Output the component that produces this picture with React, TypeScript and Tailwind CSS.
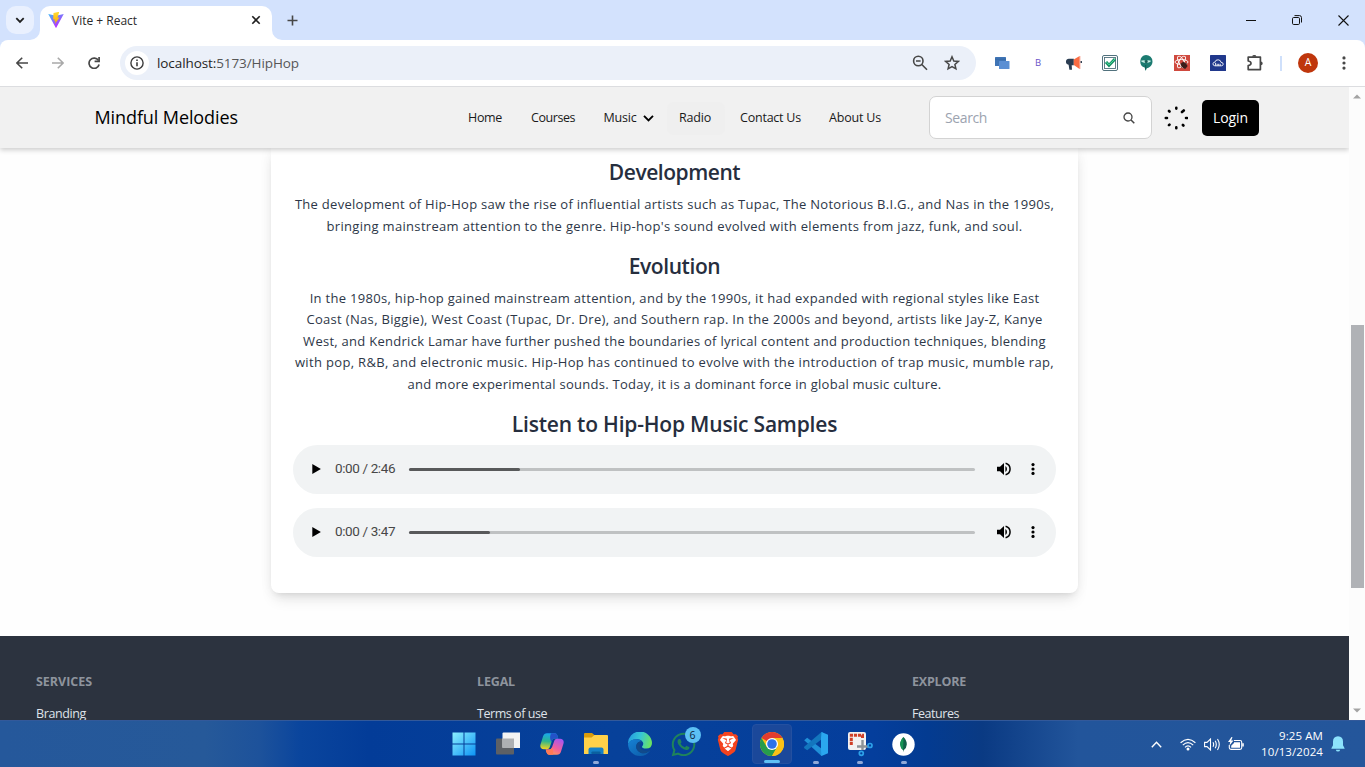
import React from "react";
import { FaWhatsapp } from "react-icons/fa";
import { SiBrave } from "react-icons/si";

type Line = { text: string; cls: string };

const development: Line[] = [
  { text: "The development of Hip-Hop saw the rise of influential artists such as Tupac, The Notorious B.I.G., and Nas in the 1990s,", cls: "tracking-[0.283px]" },
  { text: "bringing mainstream attention to the genre. Hip-hop's sound evolved with elements from jazz, funk, and soul.", cls: "tracking-[0.312px]" },
];

const evolution: Line[] = [
  { text: "In the 1980s, hip-hop gained mainstream attention, and by the 1990s, it had expanded with regional styles like East", cls: "tracking-[0.3px]" },
  { text: "Coast (Nas, Biggie), West Coast (Tupac, Dr. Dre), and Southern rap. In the 2000s and beyond, artists like Jay-Z, Kanye", cls: "tracking-[0.328px]" },
  { text: "West, and Kendrick Lamar have further pushed the boundaries of lyrical content and production techniques, blending", cls: "tracking-[0.272px]" },
  { text: "with pop, R&B, and electronic music. Hip-Hop has continued to evolve with the introduction of trap music, mumble rap,", cls: "tracking-[0.331px]" },
  { text: "and more experimental sounds. Today, it is a dominant force in global music culture.", cls: "tracking-[0.265px]" },
];

function ViteLogo() {
  return (
    <svg className="ml-2 size-4 shrink-0" viewBox="0 0 32 32">
      <defs>
        <linearGradient id="vp" x1="0" y1="0" x2="0.6" y2="0.9">
          <stop offset="0" stopColor="#41b8f8" />
          <stop offset="1" stopColor="#b830fe" />
        </linearGradient>
        <linearGradient id="vy" x1="0" y1="0" x2="0" y2="1">
          <stop offset="0" stopColor="#ffdd35" />
          <stop offset="1" stopColor="#ffa800" />
        </linearGradient>
      </defs>
      <path d="M0.5 4 16 7.5 31.5 4 16.5 31.5Q16 32 15.5 31.5Z" fill="url(#vp)" />
      <path d="M22.5 -0.5 11 1.8 10.3 15 13.6 14.3 12.7 18.6 15 18 13.8 23.8 23 11 19 11.5Z" fill="url(#vy)" />
    </svg>
  );
}

function TabStrip() {
  return (
    <div className="flex h-10 shrink-0 items-end bg-[#d3e2fd]">
      <div className="flex h-10 w-10 items-center pl-1.5">
        <div className="flex size-7 items-center justify-center rounded-[10px] bg-[#e9f0fe]">
          <svg className="size-[10px]" viewBox="0 0 10 10" fill="none" stroke="#1f1f1f" strokeWidth="1.8"><path d="M1.3 3.2 5 6.9 8.7 3.2" /></svg>
        </div>
      </div>
      <div className="relative flex h-[34px] w-[232px] items-center rounded-t-[10px] bg-white pb-[6px]">
        <svg className="absolute bottom-0 -left-[10px] size-[10px]" viewBox="0 0 10 10"><path d="M10 0V10H0A10 10 0 0 0 10 0" fill="#fff" /></svg>
        <svg className="absolute -right-[10px] bottom-0 size-[10px]" viewBox="0 0 10 10"><path d="M0 0V10H10A10 10 0 0 1 0 0" fill="#fff" /></svg>
        <ViteLogo />
        <span className="mt-px ml-2 text-[12px] tracking-[0px] whitespace-nowrap text-[#2b2b2b]">Vite + React</span>
        <svg className="mr-[11px] ml-auto size-[10px]" viewBox="0 0 10 10" stroke="#1f1f1f" strokeWidth="1.6"><path d="M1.3 1.3 8.7 8.7M8.7 1.3 1.3 8.7" /></svg>
      </div>
      <div className="flex h-10 w-10 items-center justify-center">
        <svg className="size-[11px]" viewBox="0 0 11 11" stroke="#474747" strokeWidth="1.6"><path d="M5.5 .5V10.5M.5 5.5H10.5" /></svg>
      </div>
      <div className="ml-auto flex h-10 items-center gap-9 pr-[16px]">
        <svg className="size-[10px]" viewBox="0 0 10 10" stroke="#111"><path d="M0 5.5H10" /></svg>
        <svg className="size-[10px]" viewBox="0 0 10 10" fill="none" stroke="#111"><rect x=".5" y="2.5" width="7" height="7" rx="1.2" /><path d="M2.5 .6H7.6Q9.5.7 9.5 2.6V7.5" /></svg>
        <svg className="size-[11px]" viewBox="0 0 11 11" stroke="#111" strokeWidth="1.1"><path d="M.5.5 10.5 10.5M10.5.5.5 10.5" /></svg>
      </div>
    </div>
  );
}

function Extensions() {
  return (
    <div className="flex items-center gap-5">
      <svg className="size-4" viewBox="0 0 16 16"><rect x="1" y="2" width="11" height="9" rx=".5" fill="#3f74b5" /><rect x="5" y="6" width="10.5" height="8" rx=".5" fill="#5b8fd3" /><path d="M1 4.2H12" stroke="#3567a5" strokeWidth="1" /></svg>
      <span className="w-4 text-center text-[9.5px] font-medium text-[#6a51c7]">B</span>
      <svg className="size-4" viewBox="0 0 16 16"><path d="M7.8 3.8H3A2.8 2.8 0 0 0 0 6.8 2.8 2.8 0 0 0 2.6 9.8L3.4 14.8H6L5.7 10.2H7.8Z" fill="#2b3d52" /><path d="M7.8 4.4 13.6 1V14L7.8 10Z" fill="#fa6c43" /><path d="M13.6 1H14.5V14H13.6Z" fill="#ef5638" opacity=".4" /><circle cx="15.3" cy="7" r="1" fill="#263548" /></svg>
      <svg className="size-4" viewBox="0 0 16 16" fill="none"><rect x=".5" y=".5" width="15" height="15" rx="1.5" stroke="#51717d" /><rect x="2.5" y="2.5" width="11" height="11" stroke="#51717d" strokeWidth=".9" /><path d="M4 7 7 10.3 13 4" stroke="#168c62" strokeWidth="3" /><path d="M4.2 7 7 9.8 13 4" stroke="#4fe0a0" strokeWidth="1" /></svg>
      <svg className="size-4" viewBox="0 0 16 16"><path d="M8 0A6.5 6.5 0 0 1 14.5 6.4C14.5 10 12 12.5 8.7 13.2L7.5 16 6.7 12.6A6.5 6.5 0 0 1 8 0Z" fill="#1c7b71" /><path d="M3 5.7Q5 4.6 8 5.7 11 4.6 13 5.7 12.3 7.8 8 7.8 3.7 7.8 3 5.7Z" fill="#c5ece4" /><circle cx="8.2" cy="6.4" r="1.5" fill="#185c55" /><path d="M7.7 10V14.5" stroke="#105c54" /></svg>
      <svg className="size-4" viewBox="0 0 16 16" fill="none"><rect width="16" height="16" fill="#cf493e" /><g stroke="#fff" strokeWidth=".9"><ellipse cx="7.5" cy="7" rx="6.5" ry="2.5" /><ellipse cx="7.5" cy="7" rx="6.5" ry="2.5" transform="rotate(60 7.5 7)" /><ellipse cx="7.5" cy="7" rx="6.5" ry="2.5" transform="rotate(120 7.5 7)" /></g><ellipse cx="10" cy="10.3" rx="2.7" ry="3.4" fill="#3b1d1a" transform="rotate(-35 10 10.3)" /><path d="M6.2 9 13.7 11M7 12.5 13 8M9 6.7 11.3 14" stroke="#3b1d1a" strokeWidth=".7" /></svg>
      <svg className="size-4" viewBox="0 0 16 16" fill="none"><rect width="16" height="16" rx=".6" fill="#20388c" /><path d="M4.8 10.8Q2.8 10.5 3 8.7 3.2 7.2 4.8 7.2 5.5 4.6 8.2 4.8 10.7 5 11.1 7.4 13.2 7.4 13.2 9.2 13 10.8 11.4 10.8Z" stroke="#fff" strokeWidth=".9" /><path d="M5.6 7.8V10.7M7.2 8.8V10.7M8.7 8.8V10.7M10.2 8.8V10.7" stroke="#fff" strokeWidth=".9" /></svg>
      <svg className="size-[18px]" viewBox="0 0 18 18" fill="none" stroke="#474747" strokeWidth="1.7"><path d="M2.2 3.1H14.4V15.6H2.2V11.6Q5 11.2 5 9.3 5 7.4 2.2 7Z" strokeLinejoin="round" /><path d="M6.2 2.8V2.4Q6.3 1 8.3 1 10.2 1 10.4 2.4V2.8ZM14.8 7.5Q16.7 7.6 16.7 9.4 16.7 11 14.8 11.3Z" fill="#474747" stroke="none" /></svg>
    </div>
  );
}

function Toolbar() {
  return (
    <div className="flex h-[46px] shrink-0 items-center rounded-t-[8px] bg-white">
      <div className="flex w-[120px] items-center gap-6 pl-4">
        <svg className="size-3" viewBox="0 0 12 12" fill="none" stroke="#474747" strokeWidth="1.6"><path d="M12 6H1M6.2.7.9 6 6.2 11.3" /></svg>
        <svg className="size-3" viewBox="0 0 12 12" fill="none" stroke="#a9a9a9" strokeWidth="1.6"><path d="M0 6H11M5.8.7 11.1 6 5.8 11.3" /></svg>
        <svg className="size-3" viewBox="0 0 12 12" fill="none" stroke="#474747" strokeWidth="1.7"><path d="M10.4 3.4A5.1 5.1 0 1 0 11.1 7.5" /><path d="M11.1 0V4.4H6.6" /></svg>
      </div>
      <div className="flex h-[34px] w-[856px] items-center rounded-full bg-[#ebf0f9] pr-4 pl-[5px]">
        <div className="flex size-6 items-center justify-center rounded-full bg-white">
          <svg className="size-[14px]" viewBox="0 0 14 14" fill="none" stroke="#3c3c3c" strokeWidth="1.4"><circle cx="7" cy="7" r="6.1" /><path d="M7 6.2V10.3M7 3.6V5" strokeWidth="1.6" /></svg>
        </div>
        <span className="ml-2 text-[13.5px] tracking-[-0.089px] text-[#565656]"><span className="text-[#1f1f1f]">localhost:</span>5173/HipHop</span>
        <svg className="mr-[16px] ml-auto size-4" viewBox="0 0 16 16" fill="none" stroke="#474747" strokeWidth="1.6"><circle cx="6.3" cy="6" r="4.7" /><path d="M9.8 9.5 15 14.7M4 6H8.6" /></svg>
        <svg className="size-4" viewBox="0 0 16 16" fill="none" stroke="#474747" strokeWidth="1.5"><path d="M8 1.8 9.8 6 14.3 6.4 10.9 9.4 11.9 13.8 8 11.5 4.1 13.8 5.1 9.4 1.7 6.4 6.2 6Z" /></svg>
      </div>
      <div className="ml-[18px]"><Extensions /></div>
      <div className="ml-[16px] h-[15px] w-[2px] bg-[#cfe0fb]" />
      <div className="ml-[16px] flex size-5 items-center justify-center rounded-full bg-[#bf360c] text-[10.5px] text-white">A</div>
      <svg className="ml-[24px] h-[14px] w-1" viewBox="0 0 4 14" fill="#474747"><circle cx="2" cy="1.9" r="1.6" /><circle cx="2" cy="7" r="1.6" /><circle cx="2" cy="12.1" r="1.6" /></svg>
    </div>
  );
}

function NavBar() {
  return (
    <header className="z-10 flex h-[61px] w-full shrink-0 items-center bg-[#f1f1f1] text-black shadow-[0_2px_5px_rgba(0,0,0,0.2)]">
      <div className="w-[468px] shrink-0 pb-px pl-[94.5px] text-[18px] leading-[26px] font-medium tracking-[-0.1px] whitespace-nowrap">Mindful Melodies</div>
      <nav className="flex w-[461px] shrink-0 items-center pt-[2px] text-[12.5px] whitespace-nowrap text-[#1a1a1a]">
        <a className="w-[63px] shrink-0 tracking-[-0.33px]">Home</a>
        <a className="w-[72.5px] shrink-0 tracking-[-0.44px]">Courses</a>
        <a className="flex w-[63.5px] shrink-0 items-center tracking-[-0.2px]">
          Music
          <svg className="ml-[6px] h-[7px] w-[11px]" viewBox="0 0 11 7" fill="none" stroke="#000" strokeWidth="1.9"><path d="M1 .9 5.5 5.4 10 .9" /></svg>
        </a>
        <a className="w-[58px] shrink-0 rounded-[7px] bg-[#efefef] py-[7px] pl-[12px] tracking-[-0.197px]">Radio</a>
        <a className="ml-[15px] w-[89px] shrink-0 tracking-[-0.222px]">Contact Us</a>
        <a className="shrink-0 tracking-[-0.189px]">About Us</a>
      </nav>
      <div className="flex h-[43px] w-[223px] shrink-0 items-center justify-between rounded-[7px] border border-[#d3d3d3] bg-white pr-[16px] pl-[15px]">
        <span className="text-[14px] tracking-[-0.38px] text-[#9ca3af]">Search</span>
        <svg className="size-3" viewBox="0 0 12 12" fill="none" stroke="#444" strokeWidth="1.3"><circle cx="5" cy="5" r="4" /><path d="M8 8 11.3 11.3" strokeWidth="1.5" /></svg>
      </div>
      <svg className="ml-[12px] size-6" viewBox="0 0 24 24" stroke="#000" strokeLinecap="round">
        <path strokeWidth="2.6" d="M12.3 1.8V2.6M12.3 21.4V22.2M1.8 12H3M22 12H23M5 5 5.5 5.5M18 6 19.8 4.5M18.9 19 19.4 19.5M5 19.2 5.5 18.7" />
      </svg>
      <button className="ml-[14px] h-9 w-[57px] rounded-[5px] bg-black text-[14px] font-medium tracking-[-0.09px] text-white">Login</button>
    </header>
  );
}

function Paragraph({ lines }: { lines: Line[] }) {
  return (
    <p className="mb-[14.4px] text-center text-[13px] leading-[21.6px] text-[#2d3748]">
      {lines.map((l) => (
        <span key={l.text} className={`block whitespace-nowrap ${l.cls}`}>{l.text}</span>
      ))}
    </p>
  );
}

function AudioPlayer({ time, played }: { time: string; played: string }) {
  return (
    <div className="mb-[14px] flex h-[49px] items-center rounded-full bg-[#f1f3f4] pl-[19px]">
      <svg className="h-[10px] w-[9px]" viewBox="0 0 9 10"><path d="M.3 0 8.9 5 .3 10Z" fill="#000" /></svg>
      <span className="ml-[14px] w-[74px] pb-[2px] font-['Roboto',sans-serif] text-[13.5px] tracking-[-0.38px] text-[#474747]">{time}</span>
      <div className="h-[3px] w-[566px] rounded-full bg-[#bfc1c2]">
        <div className={`h-[3px] rounded-full bg-[#58595a] ${played}`} />
      </div>
      <svg className="mb-px ml-[22px] h-[14px] w-[14px]" viewBox="0 0 14 14"><path d="M0 4.8H3L7 1V13L3 9.2H0Z" fill="#000" /><path d="M8.4 4V10Q10 9 10 7 10 5 8.4 4Z" fill="#000" /><path d="M8.6 1.2A6 6 0 0 1 8.6 12.8" fill="none" stroke="#000" strokeWidth="1.5" /></svg>
      <svg className="mb-px ml-[20px] h-[12px] w-[4px]" viewBox="0 0 4 12" fill="#000"><circle cx="2" cy="1.6" r="1.6" /><circle cx="2" cy="6" r="1.6" /><circle cx="2" cy="10.4" r="1.6" /></svg>
    </div>
  );
}

const heading = "text-center text-[21px] font-semibold leading-[28.8px] text-[#262e3e]";

function Page() {
  return (
    <div className="flex w-[1349px] flex-col overflow-hidden bg-[#fefefe]">
      <NavBar />
      <main className="ml-[271px] h-[445px] w-[807px] shrink-0 rounded-b-[8px] bg-white px-[22px] pt-[9.6px] shadow-[0_9px_14px_-3px_rgba(0,0,0,0.1),0_4px_6px_-4px_rgba(0,0,0,0.1),0_0_14px_rgba(0,0,0,0.05)]">
        <h2 className={`${heading} mb-[7.6px] tracking-[-0.45px]`}>Development</h2>
        <Paragraph lines={development} />
        <h2 className={`${heading} mb-[7.2px] tracking-[-0.42px]`}>Evolution</h2>
        <Paragraph lines={evolution} />
        <h2 className={`${heading} -mt-[0.4px] mb-[6.6px] tracking-[-0.2px]`}>Listen to Hip-Hop Music Samples</h2>
        <AudioPlayer time="0:00 / 2:46" played="w-[111px]" />
        <AudioPlayer time="0:00 / 3:47" played="w-[81px]" />
      </main>
      <footer className="mt-[43px] flex h-[84px] shrink-0 bg-[#2c333f] pt-[37px] pl-[36px] text-[12.5px] leading-[18px] text-[#dfe3ea]">
        <div className="w-[441px]">
          <h6 className="mb-[16px] font-bold tracking-[-0.03px] text-[#8e949d]">SERVICES</h6>
          <a className="block leading-[13px] tracking-[-0.38px]">Branding</a>
        </div>
        <div className="w-[435px]">
          <h6 className="mb-[16px] font-bold tracking-[-0.16px] text-[#8e949d]">LEGAL</h6>
          <a className="block leading-[13px] tracking-[-0.45px]">Terms of use</a>
        </div>
        <div>
          <h6 className="mb-[16px] font-bold tracking-[-0.2px] text-[#8e949d]">EXPLORE</h6>
          <a className="block leading-[13px] tracking-[-0.45px]">Features</a>
        </div>
      </footer>
    </div>
  );
}

function Scrollbar() {
  return (
    <div className="flex w-4 flex-col items-center bg-[#fcfcfc]">
      <svg className="mt-[7px] h-[5px] w-[8px] shrink-0" viewBox="0 0 8 5"><path d="M0 4.6 4 .4 8 4.6Z" fill="#a3a3a3" /></svg>
      <div className="mt-[226px] ml-px h-[263px] w-[13px] bg-[#b0b2b6]" />
      <svg className="mt-auto mb-[7px] h-[5px] w-[8px] shrink-0" viewBox="0 0 8 5"><path d="M0 .4 4 4.6 8 .4Z" fill="#a3a3a3" /></svg>
    </div>
  );
}

function Slot({ children, mark = "none" }: { children: React.ReactNode; mark?: "none" | "dot" | "active" }) {
  return (
    <div className="flex w-11 shrink-0 justify-center">
      <div className={mark === "active" ? "relative flex h-10 w-10 items-center justify-center rounded-[4px] border border-[#2450a0] bg-[#1b489a]" : "relative flex h-10 w-10 items-center justify-center"}>
        {children}
        {mark === "dot" && <div className="absolute bottom-0 left-[17px] h-[3px] w-[6px] rounded-full bg-[#8fa9d8]" />}
        {mark === "active" && <div className="absolute bottom-0 left-[11px] h-[3px] w-4 rounded-full bg-[#5fc0f5]" />}
      </div>
    </div>
  );
}

function TaskIcons() {
  return (
    <div className="flex items-center">
      <Slot>
        <svg className="size-6" viewBox="0 0 24 24"><defs><linearGradient id="win" x1="0" y1="0" x2="1" y2="1"><stop offset="0" stopColor="#8cf0ff" /><stop offset="1" stopColor="#0c93f5" /></linearGradient></defs><path fill="url(#win)" d="M.5.5H11.5V11.5H.5ZM12.5.5H23.5V11.5H12.5ZM.5 12.5H11.5V23.5H.5ZM12.5 12.5H23.5V23.5H12.5Z" /></svg>
      </Slot>
      <Slot>
        <svg className="size-6" viewBox="0 0 24 24"><rect x="0" y="6.5" width="18" height="16" rx="1" fill="#5d6065" /><rect x="6.5" y=".5" width="18" height="15.5" rx="1" fill="#f3f3f3" /><path d="M6.5 6.5H18V16H6.5Z" fill="#aeb0b3" /></svg>
      </Slot>
      <Slot>
        <svg className="size-6" viewBox="0 0 24 24"><defs><linearGradient id="cpa" x1=".4" y1="0" x2=".3" y2="1"><stop offset="0" stopColor="#18a7ef" /><stop offset=".5" stopColor="#2cb58e" /><stop offset="1" stopColor="#f6d41d" /></linearGradient><linearGradient id="cpb" x1=".7" y1="0" x2=".2" y2="1"><stop offset="0" stopColor="#a956ed" /><stop offset=".55" stopColor="#f3609a" /><stop offset="1" stopColor="#ffa34c" /></linearGradient></defs><path d="M7 1.2H15Q17 1.3 17.6 4L18.3 6.5H14.5Q12.7 6.6 12.1 8.5L9.6 15.5Q9 17.3 7 17.3H4Q-.6 17 .5 12.5L3 4.5Q4 1.2 7 1.2Z" fill="url(#cpa)" /><path d="M11 1.2H15Q17 1.3 17.6 4L18.3 6.5H14.5Q12.7 6.6 12.1 8.5L11.5 10Q9 6 11 1.2Z" fill="#2351c9" /><path d="M17 22.8H9Q7 22.7 6.4 20L5.7 17.5H9.5Q11.3 17.4 11.9 15.5L14.4 8.5Q15 6.7 17 6.7H20Q24.6 7 23.5 11.5L21 19.5Q20 22.8 17 22.8Z" fill="url(#cpb)" /><path d="M13 22.8H9Q7 22.7 6.4 20L5.7 17.5H9.5Q11 17.5 11.9 15.5Q14 19 13 22.8Z" fill="#ff7957" /></svg>
      </Slot>
      <Slot mark="dot">
        <svg className="size-6" viewBox="0 0 24 24"><path d="M0 2Q0 1 1 1H8L11 3.5V7H0Z" fill="#d99b0b" /><path d="M0 5.5H7.5L10.5 3H23Q24 3 24 4V22H0Z" fill="#ffd149" /><path d="M4.5 22V17.5Q4.5 15.5 6.5 15.5H17.5Q19.5 15.5 19.5 17.5V22Z" fill="#1580c7" /><path d="M7.5 22V20.2Q7.5 19.5 8.5 19.5H15.5Q16.5 19.5 16.5 20.2V22Z" fill="#0b609f" /></svg>
      </Slot>
      <Slot>
        <svg className="size-6" viewBox="0 0 24 24"><defs><linearGradient id="ed1" x1="0" y1=".3" x2="1" y2=".5"><stop offset="0" stopColor="#249be0" /><stop offset=".5" stopColor="#36c6d6" /><stop offset="1" stopColor="#6be360" /></linearGradient><linearGradient id="ed2" x1="0" y1="0" x2="1" y2="1"><stop offset="0" stopColor="#1682d5" /><stop offset="1" stopColor="#0c59a4" /></linearGradient></defs><path d="M0 12A12 12 0 0 1 24 11Q24 16.5 18 16.5 14 16.5 14 14.7 14 14.3 14.8 13.4 15.6 12.1 15 10.5 13.2 7.2 9 7.3 2 7.5 0 12Z" fill="url(#ed1)" /><path d="M0 12Q2 7.2 8.6 7.3 12 7.4 14 9.5 9.4 9 8.3 13.3 7.5 18.5 13 21 17.5 22.4 22.2 18.5 18.6 24 12 24A12 12 0 0 1 0 12Z" fill="url(#ed2)" /><path d="M14 9.5Q9.4 9 8.3 13.3 7.5 18.5 13 21 17.5 22.4 22.2 18.5 22.6 17.7 21.8 17.9 17.4 19.6 13.5 17.2 9.5 14.2 14 9.5Z" fill="#114a8b" /></svg>
      </Slot>
      <Slot>
        <FaWhatsapp className="size-[27px] text-[#20845a]" />
        <span className="absolute top-[3px] right-[3px] flex size-4 items-center justify-center rounded-full bg-[#5cc0f4] text-[10.5px] leading-none text-[#10233c]">6</span>
      </Slot>
      <Slot>
        <svg className="absolute size-6" viewBox="0 0 24 24"><path d="M5.5 3H18.5L21 8 19 17 12 22.5 5 17 3 8Z" fill="#fff" /></svg>
        <SiBrave className="relative size-[24px] text-[#f4431f]" />
      </Slot>
      <Slot mark="active">
        <svg className="size-6" viewBox="0 0 24 24"><circle cx="12" cy="12" r="12" fill="#fbc116" /><path d="M12 12 1.6 6A12 12 0 0 1 22.4 6H12Z" fill="#e33b2e" /><path d="M1.6 6A12 12 0 0 0 12 24L17.2 15 12 12 6.8 15Z" fill="#269c4c" /><path d="M12 12V6H22.4A12 12 0 0 1 12 24L17.2 15Z" fill="#fbc116" /><circle cx="12" cy="12" r="6" fill="#fff" /><circle cx="12" cy="12" r="4.8" fill="#2d72e8" /></svg>
      </Slot>
      <Slot mark="dot">
        <svg className="size-6" viewBox="0 0 24 24"><path d="M.2 8.3 3.2 5.7 18 17V24L17.5 24Z" fill="#2090d8" /><path d="M17.5 0 19 .6 18 7 3.2 18.3 0 16 .2 14.8Z" fill="#1376be" /><path d="M17.5 0 24 2.8V21.2L17.5 24 17 18V6Z" fill="#2aa7ef" /></svg>
      </Slot>
      <Slot mark="dot">
        <svg className="size-[26px]" viewBox="0 0 26 26" fill="none"><rect x="1" y="1" width="18" height="18" rx="2" fill="#f2f2f2" /><path d="M4.3 14V4.3H15.5V8" stroke="#cf3f28" strokeWidth="3" strokeDasharray="3.2 .9" /><path d="M15.5 9V19M10 15.5H21" stroke="#8c9297" strokeWidth="2.4" /><circle cx="14.3" cy="22.3" r="2" stroke="#2ca0e8" strokeWidth="1.7" /><circle cx="23" cy="14.5" r="2" stroke="#2ca0e8" strokeWidth="1.7" /></svg>
      </Slot>
      <Slot mark="dot">
        <svg className="size-[23px]" viewBox="0 0 23 23"><circle cx="11.5" cy="11.5" r="11.2" fill="#fff" /><path d="M11.5 4Q15 7.5 14.8 11.5 14.5 15.3 11.9 17L11.5 19 11.1 17Q8.4 15.2 8.2 11.5 8.1 7.5 11.5 4Z" fill="#116149" /><path d="M11.5 4Q8.1 7.5 8.2 11.5 8.4 15.2 11.1 17Z" fill="#159454" /></svg>
      </Slot>
    </div>
  );
}

function Taskbar() {
  return (
    <div className="flex h-[47px] shrink-0 items-center border-t border-[#33599a] bg-[linear-gradient(90deg,#25589b_0%,#265999_15%,#1d529b_19%,#0a459d_22%,#033c98_27%,#07419a_45%,#043e9c_64%,#033b91_68%,#0a3a83_72%,#22559b_79%,#24569b_100%)] pl-[441.5px] text-white">
      <TaskIcons />
      <div className="ml-auto flex items-center">
        <svg className="h-[7px] w-[11px]" viewBox="0 0 11 7" fill="none" stroke="#fff" strokeWidth="1.4"><path d="M.8 6.2 5.5 1.3 10.2 6.2" /></svg>
        <svg className="ml-[18px] h-[13px] w-4" viewBox="0 0 16 13" fill="none" stroke="#fff" strokeWidth="1.2"><path d="M.6 4.8Q8-2.2 15.4 4.8M2.8 7.2Q8 2 13.2 7.2M5 9.4Q8 6.2 11 9.4" /><circle cx="8" cy="11" r="1.5" fill="#fff" stroke="none" /></svg>
        <svg className="ml-[8px] h-[13px] w-[17px]" viewBox="0 0 17 13" fill="none" stroke="#fff" strokeWidth="1.1"><path d="M.6 4.4H3L6.5 1V12L3 8.6H.6ZM9 4.3Q10.3 6.5 9 8.7M11.2 2.8Q13.4 6.5 11.2 10.2M13.5 1Q17 6.5 13.5 12" /></svg>
        <svg className="ml-[7px] h-[14px] w-4" viewBox="0 0 16 14" fill="none" stroke="#fff" strokeWidth="1.1"><path d="M6 3.5H12Q13.7 3.5 13.7 5.2V10.8Q13.7 12.4 12 12.4H3Q1.3 12.4 1.3 10.8V8" /><path d="M6 5.2H12V10.8H3.2V8.8L6 6Z" fill="#fff" stroke="none" /><path d="M14.2 6.3H15.8V9.5H14.2Z" fill="#fff" stroke="none" /><path d="M3.5 0 0 5H2.2L1.5 8.5 5.5 3.5H3.2L4.5.3Z" fill="#fff" stroke="none" /></svg>
        <div className="ml-[8px] flex w-[71px] flex-col items-end text-[11.5px] leading-4 tracking-[0.09px]">
          <span>9:25 AM</span>
          <span>10/13/2024</span>
        </div>
        <svg className="mr-[20px] ml-[8px] h-[16px] w-[14px]" viewBox="0 0 14 16" fill="#8ce2fc"><path d="M7 .3Q12 .5 12 5.5V9.3L13.6 12.2Q13.7 12.8 13 12.8H1Q.3 12.8.4 12.2L2 9.3V5.5Q2 .5 7 .3ZM4.8 13.7H9.2Q8.8 15.6 7 15.6 5.2 15.6 4.8 13.7Z" /></svg>
      </div>
    </div>
  );
}

export default function App() {
  return (
    <div className="flex h-[767px] w-[1365px] flex-col overflow-hidden bg-white font-['Open_Sans','Noto_Sans',sans-serif]">
      <div className="flex shrink-0 flex-col bg-[#d3e2fd]">
        <TabStrip />
        <Toolbar />
      </div>
      <div className="h-px shrink-0 bg-[#dcdde0]" />
      <div className="flex h-[633px] shrink-0 overflow-hidden">
        <Page />
        <Scrollbar />
      </div>
      <Taskbar />
    </div>
  );
}
